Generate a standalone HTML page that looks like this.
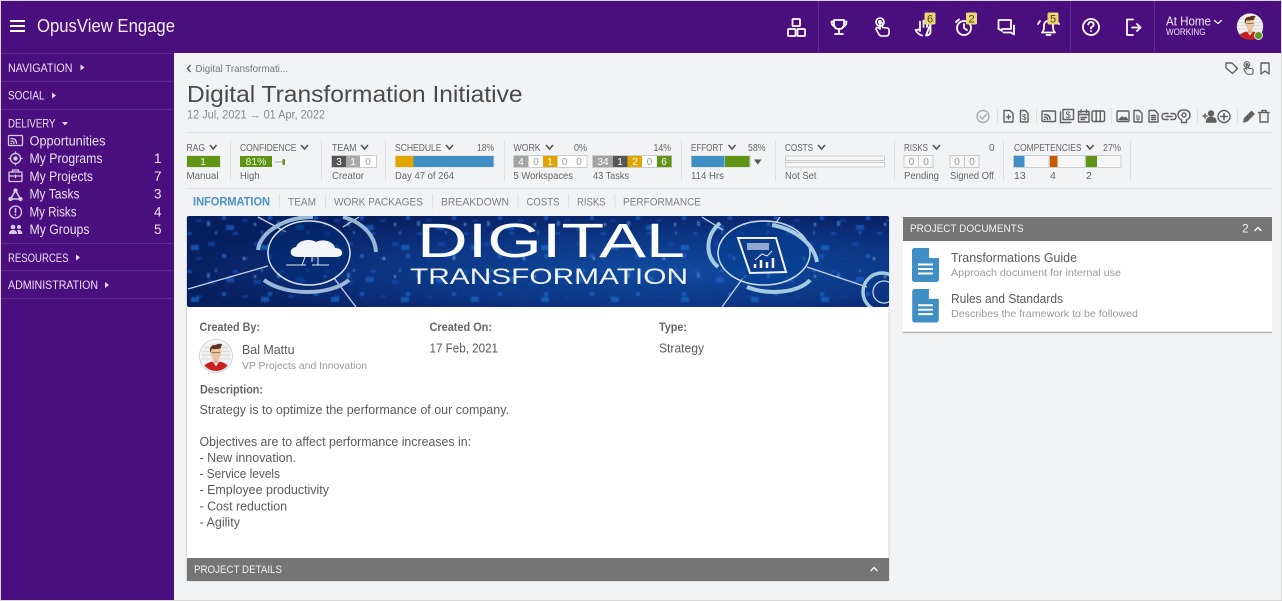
<!DOCTYPE html>
<html><head><meta charset="utf-8"><title>OpusView Engage</title>
<style>
html,body{margin:0;padding:0;background:#f2f3f5;width:1282px;height:601px;overflow:hidden}
svg{display:block}
text{font-family:"Liberation Sans",sans-serif}
.n{font-size:11.5px;fill:#e9e1f2}
.m{font-size:13.5px;fill:#e9e2f2}
.l{font-size:10px;fill:#666}
.s{font-size:10.5px;fill:#666}
.t{font-size:11px;fill:#808080}
.b{font-size:13px;fill:#5a5a5a}
.h{font-size:11.5px;fill:#444}
.w{font-size:10px;fill:#fff;text-anchor:middle}
.g{font-size:10px;fill:#999;text-anchor:middle}
.ic{fill:none;stroke:#fff;stroke-width:1.8;stroke-linecap:round;stroke-linejoin:round}
.i2{fill:none;stroke:#606060;stroke-width:1.4;stroke-linejoin:round;stroke-linecap:round}
.si{fill:none;stroke:#d8cbe6;stroke-width:1.3;stroke-linejoin:round;stroke-linecap:round}
.ch{fill:none;stroke:#555;stroke-width:1.6}
</style></head><body>
<svg xmlns="http://www.w3.org/2000/svg" width="1282" height="601" viewBox="0 0 1282 601">
<defs>
<pattern id="p1" width="46" height="38" patternUnits="userSpaceOnUse">
<rect x="3" y="4" width="5" height="3" fill="#1553b8"/><rect x="24" y="14" width="7" height="4" fill="#0f45a5"/><rect x="38" y="26" width="4" height="4" fill="#1a62cc"/><rect x="12" y="29" width="6" height="3" fill="#0e3f98"/><rect x="31" y="3" width="2" height="3" fill="#2a78d8"/>
</pattern>
<pattern id="p2" width="70" height="52" patternUnits="userSpaceOnUse" patternTransform="translate(11 7)">
<rect x="5" y="10" width="8" height="5" fill="#1b66cc"/><rect x="40" y="30" width="8" height="5" fill="#2070d0"/><rect x="56" y="6" width="3" height="5" fill="#4a8fdc"/><rect x="22" y="42" width="2" height="3" fill="#8ab4e8"/><rect x="33" y="8" width="2" height="3" fill="#8ab4e8"/>
</pattern>
<filter id="soft"><feGaussianBlur stdDeviation="0.7"/></filter>
<filter id="soft2"><feGaussianBlur stdDeviation="0.35"/></filter>
<radialGradient id="bg" cx="0.68" cy="0.6" r="0.7"><stop offset="0" stop-color="#114a9f"/><stop offset="0.55" stop-color="#0c3584"/><stop offset="1" stop-color="#071f5e"/></radialGradient>
<clipPath id="ban"><rect x="187" y="216" width="702" height="91" rx="2"/></clipPath>
<symbol id="doc" viewBox="0 0 27 34"><path d="M2.5 0H17L27 10V31.5A2.5 2.5 0 0 1 24.500 34H2.500A2.500 2.500 0 0 1 0 31.500V2.500A2.500 2.500 0 0 1 2.500 0Z" fill="#3f8fc4"/><path d="M17 0V10H27Z" fill="#fff"/><path d="M6 16.500H21M6 21H21M6 25.500H21" stroke="#fff" stroke-width="2"/></symbol>
<symbol id="touch" viewBox="0 0 20 20"><g fill="none" stroke="currentColor" stroke-width="1.6" stroke-linejoin="round" stroke-linecap="round"><circle cx="9" cy="5" r="4"/><circle cx="9" cy="5" r="1.300" fill="currentColor"/><path d="M9 5V12L7 10.500Q5 10 5 12L8 17.500Q9 19 11 19H15Q18 19 18 16V13Q18 11 15.500 11L11.500 10.500V6"/></g></symbol>
<symbol id="man" viewBox="0 0 34 34"><clipPath id="cc"><circle cx="17" cy="17" r="16"/></clipPath><g clip-path="url(#cc)"><rect width="34" height="34" fill="#f1f1f1"/><path d="M0 8H34M0 12H34M0 16H34M0 20H34" stroke="#ddd" stroke-width="1.500"/><path d="M1 34Q3 25 13 23H21Q31 25 33 34Z" fill="#c8201e"/><path d="M13.500 23L17 28L20.500 23Z" fill="#fff"/><rect x="14.500" y="18" width="5" height="7" fill="#e2b48c"/><ellipse cx="17" cy="13.500" rx="5.500" ry="7" fill="#eec49e"/><path d="M11 14Q9 5 17 5Q21 3 24 5Q21 7 22.500 11L22 9Q15 10 12.500 9.500Z" fill="#5e3418"/><path d="M12.500 13.500H21.500" stroke="#666" stroke-width="1"/></g></symbol>
</defs>

<rect width="1282" height="601" fill="#f2f3f5"/>
<rect x="1" y="1" width="173" height="599" fill="#4a0e7e"/>
<rect x="1" y="1" width="1280" height="52" fill="#4a0e7e"/>
<path d="M0 0.500H1282M0.500 0V601M0 600.500H1282M1281.500 0V601" stroke="#d8d8d8"/>
<path d="M10 21H25M10 26H25M10 31H25" stroke="#fff" stroke-width="2"/>
<text x="37" y="32" textLength="138" lengthAdjust="spacingAndGlyphs" style="font-size:18.500px;fill:#f3eef8">OpusView Engage</text>
<path d="M1 53.500H173M1 81.500H173M1 109.500H173M1 243.500H173M1 270.500H173M1 298.500H173" stroke="#5f2a90"/>
<text class="n" x="8" y="72" textLength="64.500" lengthAdjust="spacingAndGlyphs">NAVIGATION</text><path d="M80.500 64.500L84.500 67.500L80.500 70.500Z" fill="#e6ddf0"/>
<text class="n" x="8" y="99.500" textLength="36.500" lengthAdjust="spacingAndGlyphs">SOCIAL</text><path d="M52 92.500L56 95.500L52 98.500Z" fill="#e6ddf0"/>
<text class="n" x="8" y="127.500" textLength="47.500" lengthAdjust="spacingAndGlyphs">DELIVERY</text><path d="M62 122L68 122L65 125.500Z" fill="#e6ddf0"/>
<text class="n" x="8" y="262" textLength="60.500" lengthAdjust="spacingAndGlyphs">RESOURCES</text><path d="M76 254.500L80 257.500L76 260.500Z" fill="#e6ddf0"/>
<text class="n" x="8" y="289" textLength="90" lengthAdjust="spacingAndGlyphs">ADMINISTRATION</text><path d="M105 282L109 285L105 288Z" fill="#e6ddf0"/>
<text class="m" x="29.500" y="145.500" textLength="76" lengthAdjust="spacingAndGlyphs">Opportunities</text>
<text class="m" x="29.500" y="163" textLength="73" lengthAdjust="spacingAndGlyphs">My Programs</text>
<text class="m" x="29.500" y="181" textLength="63.500" lengthAdjust="spacingAndGlyphs">My Projects</text>
<text class="m" x="29.500" y="198.500" textLength="50" lengthAdjust="spacingAndGlyphs">My Tasks</text>
<text class="m" x="29.500" y="216.500" textLength="47" lengthAdjust="spacingAndGlyphs">My Risks</text>
<text class="m" x="29.500" y="234" textLength="60" lengthAdjust="spacingAndGlyphs">My Groups</text>
<text class="m" x="154" y="163">1</text><text class="m" x="154" y="181">7</text><text class="m" x="154" y="198.500">3</text><text class="m" x="154" y="216.500">4</text><text class="m" x="154" y="234">5</text>
<g class="si">
<rect x="8.500" y="135.500" width="14" height="10" rx="1"/><path d="M11 143.500h.5M11 141Q14 141 14 143.500M11 138.500Q16.500 138.500 16.500 143.500"/>
<circle cx="15.500" cy="158.500" r="5"/><circle cx="15.500" cy="158.500" r="1.500" fill="#d8cbe6"/><path d="M15.500 152V153.500M15.500 163.500V165M9 158.500H10.500M20.500 158.500H22"/>
<rect x="9" y="172" width="13" height="9.500" rx="1"/><path d="M12.500 172V170H18.500V172M9 176H22M15.500 175V177.500"/>
<path d="M15.500 190.500L10.500 199M15.500 190.500L20.500 199M10.500 199H20.500" stroke-width="1.500"/><circle cx="15.500" cy="190.500" r="1.500" fill="#d8cbe6"/><circle cx="10.500" cy="199" r="1.500" fill="#d8cbe6"/><circle cx="20.500" cy="199" r="1.500" fill="#d8cbe6"/>
<circle cx="15.500" cy="212" r="6"/><path d="M15.500 208.500V212.500M15.500 214.700V215" stroke-width="1.600"/>
</g>
<g fill="#d8cbe6"><circle cx="13" cy="227" r="2.300"/><circle cx="19" cy="227" r="2"/><path d="M9 234Q9 230 13 230Q17 230 17 234ZM18 234Q18 231 17 230Q22 229 22.500 234Z"/></g>

<path d="M818.500 1V52M1070.500 1V52M1154.500 1V52" stroke="#5f2a90"/>
<g class="ic">
<rect x="792.500" y="19" width="7.500" height="7" rx=".8"/><rect x="788" y="29" width="7.500" height="7" rx=".8"/><rect x="797.500" y="29" width="7.500" height="7" rx=".8"/>
<path d="M834 20H844V24.500Q844 29 839 29Q834 29 834 24.500ZM834 21.500H831.500Q831.500 26 835 26.500M844 21.500H846.500Q846.500 26 843 26.500M839 29V33M835 34H843"/>
<path d="M922 35.500Q918 34.500 915.500 30L919 29.500L920 31V23M920 27V21.500M923.500 27V20.500M927 27V21.500M930.500 24V31Q930.500 35.500 926 35.500Z"/>
<circle cx="964" cy="28" r="7"/><path d="M964 24V28L967 30M956 22L959 19.500"/>
<path d="M998.500 20H1011V29H1002V31L999 29H998.500ZM1014 25.500V34.500L1011 32.500H1003.500"/>
<path d="M1042 32.500Q1044 31 1044 26Q1044 21 1048.500 21Q1053 21 1053 26Q1053 31 1055 32.500ZM1046.500 35H1050.500M1040 21L1038 24M1057 21L1059 24"/>
<circle cx="1091" cy="27" r="8"/><path d="M1088.300 24.500Q1088.500 22 1091 22Q1093.700 22 1093.700 24.500Q1093.700 26 1091 27.500V28.500M1091 31V31.300"/>
<path d="M1133 19.500H1127V35H1133M1132 27.500H1140M1137 24L1140.500 27.500L1137 31"/>
<path d="M1214.500 20.500L1218 23.500L1221.500 20.500" stroke-width="1.200"/>
</g>
<use href="#touch" x="871" y="17" width="20" height="20" style="color:#fff"/>
<g><rect x="924.500" y="12.500" width="11" height="12" rx="1.500" fill="#ecd676"/><text x="930" y="22.500" style="font-size:11px;fill:#4a3d0c;text-anchor:middle">6</text>
<rect x="966" y="12.500" width="11" height="12" rx="1.500" fill="#ecd676"/><text x="971.500" y="22.500" style="font-size:11px;fill:#4a3d0c;text-anchor:middle">2</text>
<rect x="1047.500" y="12.500" width="11" height="12" rx="1.500" fill="#ecd676"/><text x="1053" y="22.500" style="font-size:11px;fill:#4a3d0c;text-anchor:middle">5</text></g>
<text x="1166" y="25.500" textLength="45" lengthAdjust="spacingAndGlyphs" style="font-size:12.500px;fill:#efe8f6">At Home</text>
<text x="1166" y="35" textLength="39.500" lengthAdjust="spacingAndGlyphs" style="font-size:9px;fill:#efe8f6">WORKING</text>
<use href="#man" x="1236" y="12.500" width="28" height="28"/>
<circle cx="1258.500" cy="35.500" r="4" fill="#5b9a1e" stroke="#e8e8e8" stroke-width="1"/>

<path d="M190.500 65L187.500 68.500L190.500 72" fill="none" stroke="#555" stroke-width="1.400"/>
<text x="195.500" y="72" textLength="92.500" lengthAdjust="spacingAndGlyphs" style="font-size:10.500px;fill:#777">Digital Transformati...</text>
<text x="187" y="102" textLength="335.500" lengthAdjust="spacingAndGlyphs" style="font-size:23.500px;fill:#4a4a4a">Digital Transformation Initiative</text>
<text x="187" y="118.500" textLength="138" lengthAdjust="spacingAndGlyphs" style="font-size:12px;fill:#888">12 Jul, 2021 → 01 Apr, 2022</text>

<g class="i2">
<path d="M1226 63H1232L1237.500 68.500L1232.500 73.500L1226 68Z"/>
<path d="M1261 63H1269V74L1265 71L1261 74Z"/>
<circle cx="983" cy="116.500" r="6" stroke="#aaa"/><path d="M980 116.500L982.300 119L986 114.500" stroke="#aaa"/>
<path d="M1004 110.500H1010L1013 113.500V122H1004ZM1006.500 117H1010.500M1008.500 115V119"/>
<path d="M1020.500 110.500H1025.500L1028 113.500V122H1020.500Z"/>
<rect x="1042" y="111" width="13.500" height="10.500" rx="1"/><path d="M1044.500 119.500H1045M1044.500 117Q1047.500 117 1047.500 119.500M1044.500 114.500Q1050 114.500 1050 119.500"/>
<path d="M1063 109.500H1073.500V119.500H1063ZM1060.500 112V122.500H1071"/>
<path d="M1078.500 111.500H1089V122H1078.500ZM1078.500 114.500H1089M1081 110V112.500M1086.500 110V112.500M1081 117.500H1086.500M1081 119.500H1084.500"/>
<rect x="1092" y="111" width="12.500" height="10.500" rx="1.500"/><path d="M1096.200 111V121.500M1100.300 111V121.500"/>
<rect x="1117" y="111" width="12" height="10.500" rx="1"/><path d="M1119 119.500L1122 117L1124 118.500L1125.500 117.500L1127.500 119.500Z" fill="#555"/>
<path d="M1134 110.500H1139.500L1142 113.500V122H1134Z"/><path d="M1137 115V119.500Q1138 120.500 1139 119.500V116" stroke-width="1.100"/>
<path d="M1149 110.500H1155L1158 113.500V122H1149ZM1151.500 115.500H1155.500M1151.500 117.500H1155.500M1151.500 119.500H1155.500"/>
<path d="M1168 113.500H1165Q1162 113.500 1162 116.500Q1162 119.500 1165 119.500H1168M1171 113.500H1173Q1176 113.500 1176 116.500Q1176 119.500 1173 119.500H1171M1166 116.500H1172"/>
<path d="M1181.500 122.500V120Q1178 118 1178 115Q1178 110 1184 110Q1190 110 1190 115.500Q1190 118.500 1186.500 120V122.500Z"/><circle cx="1184" cy="115" r="2"/>
<path d="M1203 116H1207M1205 114V118" stroke-width="1.500"/>
<circle cx="1211" cy="113.500" r="2.500" fill="#606060"/><path d="M1206.500 122Q1206.500 117.500 1211 117.500Q1216 117.500 1216 122Z" fill="#606060"/>
<circle cx="1224" cy="116.500" r="6"/><path d="M1221 116.500H1227M1224 113.500V119.500" stroke-width="1.600"/>
<path d="M1244 122L1244.500 118.500L1251.500 111.500L1254 114L1247 121Z" fill="#606060"/>
<path d="M1258.500 112.500H1269M1262 112.500V110.500H1266V112.500M1260 112.500V122H1268V112.500"/>
</g>
<text x="1024.200" y="120" style="font-size:8px;fill:#555;text-anchor:middle">$</text>
<text x="1068.200" y="118" style="font-size:9.500px;fill:#555;text-anchor:middle">$</text>
<use href="#touch" x="1240.500" y="61" width="14" height="14" style="color:#666"/>
<path d="M997.500 108V124M1036.500 108V124M1111.500 108V124M1197.500 108V124M1237.500 108V124" stroke="#dfe0e2"/>

<path d="M186 132.500H1272M186 188.500H1272" stroke="#e0e1e3"/>
<path d="M230.500 140V181M321.500 140V181M385.500 140V181M504.500 140V181M681.500 140V181M775.500 140V181M894.500 140V181M1003.500 140V181M1130.500 140V181" stroke="#dfe0e2"/>
<text class="l" x="186.500" y="151" textLength="18.500" lengthAdjust="spacingAndGlyphs">RAG</text>
<text class="l" x="240" y="151" textLength="56.500" lengthAdjust="spacingAndGlyphs">CONFIDENCE</text>
<text class="l" x="332" y="151" textLength="24.500" lengthAdjust="spacingAndGlyphs">TEAM</text>
<text class="l" x="395" y="151" textLength="46.500" lengthAdjust="spacingAndGlyphs">SCHEDULE</text>
<text class="l" x="477" y="151" textLength="17" lengthAdjust="spacingAndGlyphs">18%</text>
<text class="l" x="513.500" y="151" textLength="27" lengthAdjust="spacingAndGlyphs">WORK</text>
<text class="l" x="574" y="151" textLength="13" lengthAdjust="spacingAndGlyphs">0%</text>
<text class="l" x="653.500" y="151" textLength="17.500" lengthAdjust="spacingAndGlyphs">14%</text>
<text class="l" x="691" y="151" textLength="32" lengthAdjust="spacingAndGlyphs">EFFORT</text>
<text class="l" x="748" y="151" textLength="17.500" lengthAdjust="spacingAndGlyphs">58%</text>
<text class="l" x="785" y="151" textLength="28" lengthAdjust="spacingAndGlyphs">COSTS</text>
<text class="l" x="904" y="151" textLength="24" lengthAdjust="spacingAndGlyphs">RISKS</text>
<text class="l" x="989" y="151">0</text>
<text class="l" x="1014" y="151" textLength="67.500" lengthAdjust="spacingAndGlyphs">COMPETENCIES</text>
<text class="l" x="1103" y="151" textLength="18" lengthAdjust="spacingAndGlyphs">27%</text>
<text class="s" x="186.500" y="179" textLength="32" lengthAdjust="spacingAndGlyphs">Manual</text>
<text class="s" x="240" y="179" textLength="19.500" lengthAdjust="spacingAndGlyphs">High</text>
<text class="s" x="332" y="179" textLength="32" lengthAdjust="spacingAndGlyphs">Creator</text>
<text class="s" x="395" y="179" textLength="59" lengthAdjust="spacingAndGlyphs">Day 47 of 264</text>
<text class="s" x="513.500" y="179" textLength="59.500" lengthAdjust="spacingAndGlyphs">5 Workspaces</text>
<text class="s" x="593" y="179" textLength="36" lengthAdjust="spacingAndGlyphs">43 Tasks</text>
<text class="s" x="691" y="179" textLength="33" lengthAdjust="spacingAndGlyphs">114 Hrs</text>
<text class="s" x="785" y="179" textLength="31.500" lengthAdjust="spacingAndGlyphs">Not Set</text>
<text class="s" x="904" y="179" textLength="35" lengthAdjust="spacingAndGlyphs">Pending</text>
<text class="s" x="950" y="179" textLength="44" lengthAdjust="spacingAndGlyphs">Signed Off</text>
<text class="s" x="1014" y="179">13</text><text class="s" x="1050" y="179">4</text><text class="s" x="1086" y="179">2</text>
<path class="ch" d="M210 145L213.200 149L216.500 145M301 145L304.500 149L308 145M361 145L364.500 149L368 145M446 145L449.500 149L453 145M546 145L549.500 149L553 145M728.500 145L732 149L735.500 145M818 145L821.500 149L825 145M933 145L936.500 149L940 145M1086.500 145L1090 149L1093.500 145"/>
<rect x="186.500" y="155.500" width="34" height="12" fill="#ddd"/><rect x="187" y="156" width="33" height="11" fill="#5f9414"/><text class="w" x="203" y="165">1</text>
<rect x="240" y="156" width="32" height="11" fill="#5f9414"/><text class="w" x="256" y="165" style="fill:#e9f2dc;font-size:10.500px">81%</text>
<path d="M275 162H283" stroke="#aaa"/><rect x="282.500" y="159" width="2.500" height="6" rx="1" fill="#5f9414"/>
<rect x="331.500" y="155.500" width="45" height="12" fill="#fff" stroke="#ccc"/>
<rect x="332" y="156" width="14" height="11" fill="#555"/><rect x="346" y="156" width="14" height="11" fill="#aaa"/>
<text class="w" x="339" y="165">3</text><text class="w" x="353" y="165">1</text><text class="g" x="368" y="165">0</text>
<rect x="395" y="155.500" width="99.500" height="12" fill="#ddd"/><rect x="395.500" y="156" width="18" height="11" fill="#e3a600"/><rect x="413.500" y="156" width="80" height="11" fill="#3f8fc4"/>
<rect x="513.500" y="155.500" width="73.500" height="12" fill="#fff" stroke="#ccc"/>
<rect x="514" y="156" width="14.500" height="11" fill="#a3a3a3"/><rect x="543" y="156" width="14.500" height="11" fill="#e3a600"/>
<text class="w" x="521" y="165">4</text><text class="g" x="536" y="165">0</text><text class="w" x="550" y="165">1</text><text class="g" x="564.500" y="165">0</text><text class="g" x="579" y="165">0</text>
<rect x="592.500" y="155.500" width="79" height="12" fill="#fff" stroke="#ccc"/>
<rect x="593" y="156" width="20" height="11" fill="#a3a3a3"/><rect x="613" y="156" width="14.500" height="11" fill="#555"/><rect x="627.500" y="156" width="14.500" height="11" fill="#e3a600"/><rect x="657" y="156" width="14.500" height="11" fill="#5f9414"/>
<text class="w" x="603" y="165">34</text><text class="w" x="620" y="165">1</text><text class="w" x="635" y="165">2</text><text class="g" x="649.500" y="165">0</text><text class="w" x="664" y="165">6</text>
<rect x="691" y="155.500" width="60" height="12" fill="#d8d8d8"/><rect x="691.500" y="156" width="33" height="11" fill="#3f8fc4"/><rect x="725" y="156" width="24.500" height="11" fill="#5f9414"/>
<path d="M754 159.500H761.500L757.750 164.500Z" fill="#555"/>
<rect x="785.500" y="156" width="99" height="4.500" fill="#f7f7f7" stroke="#ccc"/><rect x="785.500" y="162.500" width="99" height="4.500" fill="#f7f7f7" stroke="#ccc"/>
<g fill="#f7f7f7" stroke="#ccc"><rect x="904" y="155.500" width="14.500" height="12"/><rect x="918.500" y="155.500" width="14.500" height="12"/><rect x="950" y="155.500" width="14.500" height="12"/><rect x="964.500" y="155.500" width="14.500" height="12"/></g>
<text class="g" x="911.500" y="165">0</text><text class="g" x="926" y="165">0</text><text class="g" x="957" y="165">0</text><text class="g" x="972" y="165">0</text>
<g fill="#f7f7f7" stroke="#ccc"><rect x="1013.500" y="155.500" width="35.500" height="12"/><rect x="1049.500" y="155.500" width="35.500" height="12"/><rect x="1085.500" y="155.500" width="35.500" height="12"/></g>
<rect x="1014" y="156" width="10.500" height="11" fill="#3f8fc4"/><rect x="1050" y="156" width="7.500" height="11" fill="#c55a00"/><rect x="1086" y="156" width="11" height="11" fill="#5f9414"/>

<text x="193" y="205.500" textLength="77" lengthAdjust="spacingAndGlyphs" style="font-size:12px;font-weight:bold;fill:#4a93c6">INFORMATION</text>
<text class="t" x="288" y="205.500" textLength="28" lengthAdjust="spacingAndGlyphs">TEAM</text>
<text class="t" x="334" y="205.500" textLength="89" lengthAdjust="spacingAndGlyphs">WORK PACKAGES</text>
<text class="t" x="441" y="205.500" textLength="68" lengthAdjust="spacingAndGlyphs">BREAKDOWN</text>
<text class="t" x="526.500" y="205.500" textLength="33" lengthAdjust="spacingAndGlyphs">COSTS</text>
<text class="t" x="577" y="205.500" textLength="28.500" lengthAdjust="spacingAndGlyphs">RISKS</text>
<text class="t" x="623" y="205.500" textLength="78" lengthAdjust="spacingAndGlyphs">PERFORMANCE</text>
<path d="M279.500 194V209M325.500 194V209M432.500 194V209M518 194V209M568.500 194V209M615 194V209" stroke="#dfe0e2"/>

<rect x="186.500" y="216.500" width="702.500" height="364.500" rx="2" fill="#fff" stroke="#d8d8d8"/>
<g clip-path="url(#ban)">
<rect x="187" y="216" width="702" height="91" fill="url(#bg)"/>
<g filter="url(#soft)">
<rect x="187" y="216" width="702" height="91" fill="url(#p1)" opacity=".75"/>
<rect x="187" y="216" width="702" height="91" fill="url(#p2)" opacity=".65"/>
</g>
<g filter="url(#soft2)">
<path d="M258 217L286 232M359 217L343 227M188 289L268 266M334 278L356 307M702 217L723 230M780 217L773 227M743 278L722 307M807 267L867 287" stroke="#c5d2e6" stroke-width="1.300" fill="none"/>
<ellipse cx="309" cy="253" rx="41" ry="32" fill="#0b2a72" fill-opacity=".5" stroke="#dbe5f2" stroke-width="1.500"/>
<path d="M258 250C260 232 285 217 313 217M343 217C362 222 375 235 376 252" fill="none" stroke="#9ab8d6" stroke-width="4"/>
<path d="M264 280C285 296 330 296 349 280" fill="none" stroke="#9ab8d6" stroke-width="4"/>
<path d="M298 257C288 257 289 248 296 247C298 240 310 238 316 242C324 238 334 242 335 248C344 248 345 257 336 257Z" fill="#f2f4f8"/>
<path d="M286 265H306M312 265H329M305 257L302 265M312 257V262M318 257V265" stroke="#e4eaf4" stroke-width="1" fill="none"/>
<ellipse cx="764" cy="253" rx="46" ry="32" fill="#0e3f94" fill-opacity=".45" stroke="#cfe0f0" stroke-width="1.500"/>
<path d="M720 223C706 235 704 255 718 267M772 225C795 229 814 244 817 262" fill="none" stroke="#a4cbe2" stroke-width="4"/>
<path d="M747 287C770 296 800 292 810 280" fill="none" stroke="#a4cbe2" stroke-width="4"/>
<path d="M738 238L776 238L786 272L750 273Z" fill="#0d3a8c" stroke="#f0f4fa" stroke-width="2"/>
<rect x="747" y="243" width="22" height="7" fill="#8ea9cc"/>
<path d="M755 268V264M761 268V260M767 268V262M773 268V258" stroke="#f0f4fa" stroke-width="2.500"/>
<path d="M755 260L762 254L767 256L772 251" stroke="#dfe8f4" stroke-width="1" fill="none"/>
<circle cx="882" cy="292" r="19" fill="none" stroke="#a4cbe2" stroke-width="3.500"/>
<circle cx="884" cy="292" r="11" fill="none" stroke="#c5dcec" stroke-width="1.200"/>
</g>
<text x="417" y="257" textLength="268" lengthAdjust="spacingAndGlyphs" style="font-size:48px;fill:#fbfcfe">DIGITAL</text>
<text x="410" y="284" textLength="278" lengthAdjust="spacingAndGlyphs" style="font-size:22.500px;fill:#f0f3f8">TRANSFORMATION</text>
</g>
<text class="h" x="199.500" y="331" textLength="60.500" lengthAdjust="spacingAndGlyphs" style="font-weight:bold;fill:#666">Created By:</text>
<text class="h" x="429.500" y="331" textLength="62.500" lengthAdjust="spacingAndGlyphs" style="font-weight:bold;fill:#666">Created On:</text>
<text class="h" x="659" y="331" textLength="28" lengthAdjust="spacingAndGlyphs" style="font-weight:bold;fill:#666">Type:</text>
<circle cx="216" cy="356" r="16.500" fill="#fff" stroke="#ccc"/>
<use href="#man" x="200" y="340" width="32" height="32"/>
<text class="b" x="242" y="354" textLength="52.500" lengthAdjust="spacingAndGlyphs">Bal Mattu</text>
<text x="242" y="369" textLength="125" lengthAdjust="spacingAndGlyphs" style="font-size:10.500px;fill:#999">VP Projects and Innovation</text>
<text class="b" x="429.500" y="352.500" textLength="68.500" lengthAdjust="spacingAndGlyphs">17 Feb, 2021</text>
<text class="b" x="659" y="352.500" textLength="45" lengthAdjust="spacingAndGlyphs">Strategy</text>
<text class="h" x="200" y="393.500" textLength="63" lengthAdjust="spacingAndGlyphs" style="font-weight:bold;fill:#666">Description:</text>
<text class="b" x="199.500" y="414" textLength="309.500" lengthAdjust="spacingAndGlyphs">Strategy is to optimize the performance of our company.</text>
<text class="b" x="199.500" y="446" textLength="271.500" lengthAdjust="spacingAndGlyphs">Objectives are to affect performance increases in:</text>
<text class="b" x="199.500" y="462" textLength="96.500" lengthAdjust="spacingAndGlyphs">- New innovation.</text>
<text class="b" x="199.500" y="478" textLength="80.500" lengthAdjust="spacingAndGlyphs">- Service levels</text>
<text class="b" x="199.500" y="494" textLength="129.500" lengthAdjust="spacingAndGlyphs">- Employee productivity</text>
<text class="b" x="199.500" y="510.500" textLength="87.500" lengthAdjust="spacingAndGlyphs">- Cost reduction</text>
<text class="b" x="199.500" y="526.500" textLength="40.500" lengthAdjust="spacingAndGlyphs">- Agility</text>
<rect x="187" y="558" width="702" height="23" fill="#757575"/>
<text x="194" y="573" textLength="88" lengthAdjust="spacingAndGlyphs" style="font-size:11px;fill:#f2f2f2">PROJECT DETAILS</text>
<path d="M870.500 571L874 567.500L877.500 571" fill="none" stroke="#f2f2f2" stroke-width="1.500"/>

<rect x="903" y="217" width="369" height="115" fill="#fff"/>
<path d="M903 332.500H1272" stroke="#b5b5b5" stroke-width="1.500"/>
<rect x="903" y="217" width="369" height="24" fill="#757575"/>
<text x="910" y="232" textLength="113.500" lengthAdjust="spacingAndGlyphs" style="font-size:11px;fill:#f2f2f2">PROJECT DOCUMENTS</text>
<text x="1242" y="232.500" style="font-size:12px;fill:#f2f2f2">2</text>
<path d="M1254.500 231L1258 227.500L1261.500 231" fill="none" stroke="#f2f2f2" stroke-width="1.500"/>
<use href="#doc" x="912" y="248" width="27" height="34"/>
<use href="#doc" x="912" y="289" width="27" height="33.500"/>
<text x="951" y="262" textLength="126" lengthAdjust="spacingAndGlyphs" style="font-size:13px;fill:#5a5a5a">Transformations Guide</text>
<text x="951" y="276" textLength="170" lengthAdjust="spacingAndGlyphs" style="font-size:10.500px;fill:#999">Approach document for internal use</text>
<text x="951" y="303" textLength="112" lengthAdjust="spacingAndGlyphs" style="font-size:13px;fill:#5a5a5a">Rules and Standards</text>
<text x="951" y="317" textLength="187" lengthAdjust="spacingAndGlyphs" style="font-size:10.500px;fill:#999">Describes the framework to be followed</text>
</svg>
</body></html>
